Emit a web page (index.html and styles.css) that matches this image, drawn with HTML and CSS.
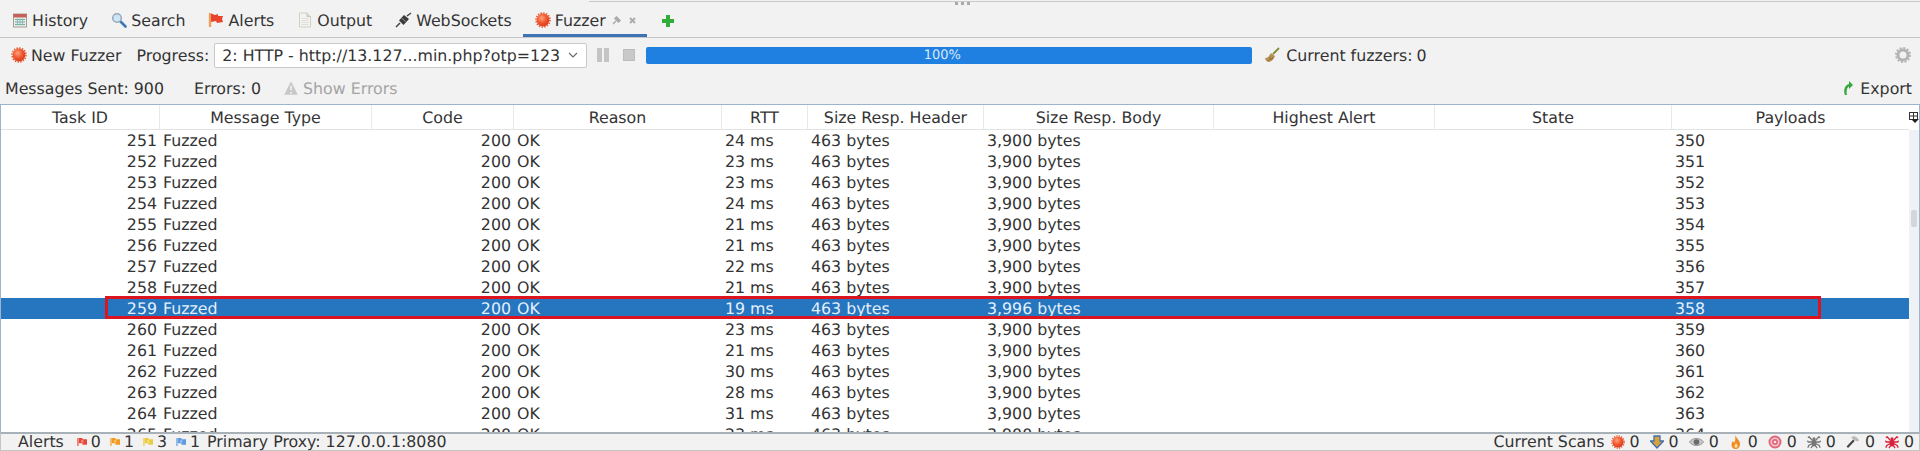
FILE: index.html
```html
<!DOCTYPE html>
<html>
<head>
    <title>Fuzzer</title>
    <link rel="stylesheet" href="styles.css">
</head>
<body>

<svg class="defs" width="0" height="0">
    <defs>
        <radialGradient id="ball" cx="40%" cy="35%" r="70%">
            <stop offset="0" stop-color="#ffa27a"/>
            <stop offset="0.55" stop-color="#f0562e"/>
            <stop offset="1" stop-color="#d23c1a"/>
        </radialGradient>
        <symbol id="burst" viewBox="0 0 16 16">
            <circle cx="8" cy="8" r="6.4" fill="url(#ball)"/>
            <circle cx="8" cy="8" r="7" fill="none" stroke="#e8562f" stroke-width="1.6" stroke-dasharray="1.4 1.35"/>
        </symbol>
        <symbol id="flag" viewBox="0 0 11 10">
            <path d="M1 0.500v9" stroke="currentColor" stroke-width="1.800" opacity=".7"/>
            <path d="M2 0.500h4v1.500h5v6H6V6.500H2z" fill="currentColor"/>
            <rect x="4.500" y="3" width="2.500" height="2.500" fill="#fff" opacity=".4"/>
        </symbol>
        <symbol id="spider" viewBox="0 0 16 16">
            <g fill="none" stroke="currentColor" stroke-width="1.500">
                <path d="M6 6L2.500 2 1 3M10 6l3.500-4L15 3M5.500 8H1.500L0.500 6.500M10.500 8h4l1-1.500M5.500 10L2 12l-1 2.500M10.500 10l3.500 2 1 2.500M6.500 12L4.500 15M9.500 12l2 3"/>
            </g>
            <ellipse cx="8" cy="9" rx="3" ry="4" fill="currentColor"/>
            <circle cx="8" cy="4.500" r="1.800" fill="currentColor"/>
        </symbol>
    </defs>
</svg>

<!-- TABS -->
<div class="tabs">
    <div class="topline"></div>
    <div class="grip"><i></i><i></i><i></i></div>

    <div class="tab">
        <svg class="icon" viewBox="0 0 16 16">
            <rect x="1.500" y="2" width="13" height="13" fill="#e8efe9" stroke="#a89a92"/>
            <rect x="1.500" y="2" width="13" height="3.500" fill="#c8605a"/>
            <path d="M3 7.500h10M3 10h10M3 12.500h10" stroke="#6fb28a" stroke-width="1.200"/>
            <path d="M5.500 6.500v7M8 6.500v7M10.500 6.500v7" stroke="#8fb4d4"/>
        </svg>
        <span>History</span>
    </div>
    <div class="tab">
        <svg class="icon" viewBox="0 0 16 16">
            <path d="M9.500 9.500l5 5" stroke="#3f77b5" stroke-width="2.600" stroke-linecap="round"/>
            <circle cx="6" cy="6" r="4.300" fill="#cfe4f5" stroke="#93a9bd" stroke-width="1.500"/>
        </svg>
        <span>Search</span>
    </div>
    <div class="tab">
        <svg class="icon" viewBox="0 0 16 16">
            <path d="M2 1v14" stroke="#e8a25c" stroke-width="2.400"/>
            <path d="M3 1.500l4 1.500 3-1 0 2 5 0-1 3 1 3-6 1-1-2-5 1z" fill="#e8452c"/>
        </svg>
        <span>Alerts</span>
    </div>
    <div class="tab">
        <svg class="icon" viewBox="0 0 16 16">
            <path d="M2.500 1h7.500l3.500 3.500V15h-11z" fill="#f4f4ee" stroke="#cfcfc8"/>
            <path d="M10 1v3.500h3.500" fill="#dcdcd4" stroke="#c4c4bc"/>
            <path d="M4.500 6.500h7M4.500 8.500h7M4.500 10.500h7M4.500 12.500h7" stroke="#dfdfd8"/>
        </svg>
        <span>Output</span>
    </div>
    <div class="tab">
        <svg class="icon wide" viewBox="0 0 17 16">
            <path d="M1 15l4-4M12 4l4-3" stroke="#444" stroke-width="1.500"/>
            <path d="M4 8.500l5-5.500 5 4-5.500 6z" fill="#3c3c3c"/>
            <path d="M6.500 6l4 3.500" stroke="#999"/>
        </svg>
        <span>WebSockets</span>
    </div>
    <div class="tab active">
        <svg class="icon"><use href="#burst"/></svg>
        <span>Fuzzer</span>
        <svg class="pin" viewBox="0 0 9 9">
            <path d="M1 8l3-3M3 2.500L6.500 6 8 4.500 4.500 1z" stroke="#aaa" stroke-width="1.500" fill="#aaa"/>
        </svg>
        <svg class="close" viewBox="0 0 7 7">
            <path d="M1 1l5 5M6 1l-5 5" stroke="#aaa" stroke-width="1.800"/>
        </svg>
    </div>
    <svg class="plus" viewBox="0 0 14 14">
        <path d="M7 1v12M1 7h12" stroke="#32ad3a" stroke-width="4"/>
    </svg>
</div>

<!-- TOOLBAR -->
<div class="toolbar">
    <svg class="icon"><use href="#burst"/></svg>
    <span class="new-fuzzer">New Fuzzer</span>
    <span class="progress-label">Progress:</span>
    <div class="select">
        <span>2: HTTP - http://13.127...min.php?otp=123</span>
        <svg class="chevron" viewBox="0 0 10 6">
            <path d="M1 1l4 4 4-4" fill="none" stroke="#666" stroke-width="1.100"/>
        </svg>
    </div>
    <div class="pause"><i></i><i></i></div>
    <div class="stop"></div>
    <div class="progress">100%</div>
    <svg class="icon broom" viewBox="0 0 16 16">
        <path d="M9 7l6-6" stroke="#7f8f3a" stroke-width="1.800"/>
        <path d="M1 11c3 0 4-2 6-5l4 3c-1 3-3 5-6 6-2 0-4-2-4-4z" fill="#b89254"/>
        <path d="M4 14l3-4M7 13l2-3" stroke="#8c6a34"/>
    </svg>
    <span class="fuzzers"><span>Current fuzzers:</span> <span>0</span></span>
    <svg class="gear" viewBox="0 0 16 16">
        <circle cx="8" cy="8" r="5" fill="none" stroke="#b4b4b4" stroke-width="3"/>
        <circle cx="8" cy="8" r="7" fill="none" stroke="#b4b4b4" stroke-width="2" stroke-dasharray="2 1.670"/>
    </svg>
</div>

<!-- INFO ROW -->
<div class="info">
    <span class="sent">Messages Sent: 900</span>
    <span class="errors">Errors: 0</span>
    <svg class="warn" viewBox="0 0 14 14">
        <path d="M7 1l6 12H1z" fill="#c8c8c8"/>
        <path d="M7 5v4M7 10.500v1.500" stroke="#f2f2f2" stroke-width="1.400"/>
    </svg>
    <span class="show-errors">Show Errors</span>
    <svg class="export-icon" viewBox="0 0 10 16">
        <path d="M2 15C0 10 2 5 6 4V1l4 4-4 4V6.500C4 7.500 3 11 4 15z" fill="#37a63c"/>
    </svg>
    <span>Export</span>
</div>

<!-- RESULTS -->
<div class="results">
    <div class="table-box">
        <table>
            <colgroup>
                <col class="c-id"><col class="c-type"><col class="c-code"><col class="c-reason"><col class="c-rtt">
                <col class="c-head"><col class="c-body"><col class="c-alert"><col class="c-state"><col class="c-pay">
            </colgroup>
            <thead>
                <tr>
                    <th>Task ID</th><th>Message Type</th><th>Code</th><th>Reason</th><th>RTT</th>
                    <th>Size Resp. Header</th><th>Size Resp. Body</th><th>Highest Alert</th><th>State</th><th>Payloads</th>
                </tr>
            </thead>
            <tbody>
                <tr><td class="num">251</td><td>Fuzzed</td><td class="num">200</td><td>OK</td><td>24 ms</td><td>463 bytes</td><td>3,900 bytes</td><td></td><td></td><td>350</td></tr>
                <tr><td class="num">252</td><td>Fuzzed</td><td class="num">200</td><td>OK</td><td>23 ms</td><td>463 bytes</td><td>3,900 bytes</td><td></td><td></td><td>351</td></tr>
                <tr><td class="num">253</td><td>Fuzzed</td><td class="num">200</td><td>OK</td><td>23 ms</td><td>463 bytes</td><td>3,900 bytes</td><td></td><td></td><td>352</td></tr>
                <tr><td class="num">254</td><td>Fuzzed</td><td class="num">200</td><td>OK</td><td>24 ms</td><td>463 bytes</td><td>3,900 bytes</td><td></td><td></td><td>353</td></tr>
                <tr><td class="num">255</td><td>Fuzzed</td><td class="num">200</td><td>OK</td><td>21 ms</td><td>463 bytes</td><td>3,900 bytes</td><td></td><td></td><td>354</td></tr>
                <tr><td class="num">256</td><td>Fuzzed</td><td class="num">200</td><td>OK</td><td>21 ms</td><td>463 bytes</td><td>3,900 bytes</td><td></td><td></td><td>355</td></tr>
                <tr><td class="num">257</td><td>Fuzzed</td><td class="num">200</td><td>OK</td><td>22 ms</td><td>463 bytes</td><td>3,900 bytes</td><td></td><td></td><td>356</td></tr>
                <tr><td class="num">258</td><td>Fuzzed</td><td class="num">200</td><td>OK</td><td>21 ms</td><td>463 bytes</td><td>3,900 bytes</td><td></td><td></td><td>357</td></tr>
                <tr class="selected"><td class="num">259</td><td>Fuzzed</td><td class="num">200</td><td>OK</td><td>19 ms</td><td>463 bytes</td><td>3,996 bytes</td><td></td><td></td><td>358</td></tr>
                <tr><td class="num">260</td><td>Fuzzed</td><td class="num">200</td><td>OK</td><td>23 ms</td><td>463 bytes</td><td>3,900 bytes</td><td></td><td></td><td>359</td></tr>
                <tr><td class="num">261</td><td>Fuzzed</td><td class="num">200</td><td>OK</td><td>21 ms</td><td>463 bytes</td><td>3,900 bytes</td><td></td><td></td><td>360</td></tr>
                <tr><td class="num">262</td><td>Fuzzed</td><td class="num">200</td><td>OK</td><td>30 ms</td><td>463 bytes</td><td>3,900 bytes</td><td></td><td></td><td>361</td></tr>
                <tr><td class="num">263</td><td>Fuzzed</td><td class="num">200</td><td>OK</td><td>28 ms</td><td>463 bytes</td><td>3,900 bytes</td><td></td><td></td><td>362</td></tr>
                <tr><td class="num">264</td><td>Fuzzed</td><td class="num">200</td><td>OK</td><td>31 ms</td><td>463 bytes</td><td>3,900 bytes</td><td></td><td></td><td>363</td></tr>
                <tr><td class="num">265</td><td>Fuzzed</td><td class="num">200</td><td>OK</td><td>23 ms</td><td>463 bytes</td><td>3,900 bytes</td><td></td><td></td><td>364</td></tr>
            </tbody>
        </table>
        <div class="redbox"></div>
    </div>
    <div class="vbar">
        <div class="corner">
            <svg viewBox="0 0 10 12" width="10" height="12">
                <rect x="0.500" y="0.500" width="8" height="7" fill="#fff" stroke="#333"/>
                <path d="M4.500 1v6M1 4h7" stroke="#333"/>
                <path d="M2 7h8l-4 4z" fill="#222"/>
            </svg>
        </div>
        <div class="thumb"></div>
    </div>
</div>

<!-- STATUS BAR -->
<div class="status">
    <span class="alerts-label">Alerts</span>
    <svg class="flag red"><use href="#flag"/></svg><span class="count">0</span>
    <svg class="flag orange"><use href="#flag"/></svg><span class="count">1</span>
    <svg class="flag yellow"><use href="#flag"/></svg><span class="count">3</span>
    <svg class="flag blue"><use href="#flag"/></svg><span class="count">1</span>
    <span class="proxy">Primary Proxy: 127.0.0.1:8080</span>

    <span class="scans">Current Scans</span>
    <svg class="sicon"><use href="#burst"/></svg><span class="scount">0</span>
    <svg class="sicon" viewBox="0 0 14 14">
        <path d="M4 1h6v5h3.500L7 13 0.500 6H4z" fill="#d9a23a" stroke="#3f6fb0" stroke-width="1.300"/>
    </svg><span class="scount">0</span>
    <svg class="sicon eye" viewBox="0 0 16 10">
        <path d="M0.500 5C4 0 12 0 15.500 5 12 10 4 10 0.500 5z" fill="#c9c9c9" stroke="#8d8d8d"/>
        <circle cx="8" cy="5" r="3" fill="#6a6a6a"/>
    </svg><span class="scount">0</span>
    <svg class="sicon" viewBox="0 0 10 14">
        <path d="M4 0c1 3 5 5 5 9 0 3-2 5-4.500 5S0.500 12 0.500 9.500C0.500 8 1.500 7 2 6c.5 1 1 1.500 1.500 1.500C4.500 6 4.500 3 4 0z" fill="#f08a24"/>
        <path d="M5 8c1 1.500 2 2.500 1.500 4-.5 1-2.500 1-3 0-.5-1.500 1-2.500 1.500-4z" fill="#fde3a0"/>
    </svg><span class="scount">0</span>
    <svg class="sicon" viewBox="0 0 14 14">
        <circle cx="7" cy="7" r="6.500" fill="#e0667a"/>
        <circle cx="7" cy="7" r="4.600" fill="#f5c5cb"/>
        <circle cx="7" cy="7" r="3" fill="#e0667a"/>
        <circle cx="7" cy="7" r="1.300" fill="#f5e0e2"/>
    </svg><span class="scount">0</span>
    <svg class="sicon gray"><use href="#spider"/></svg><span class="scount">0</span>
    <svg class="sicon" viewBox="0 0 16 16">
        <path d="M9 6L1.500 14" stroke="#444" stroke-width="2.400"/>
        <path d="M6 2.500C9 0.500 12 1.500 15 6l-2 1.500L9.500 6 8 5z" fill="#b9b9b9"/>
    </svg><span class="scount">0</span>
    <svg class="sicon crimson"><use href="#spider"/></svg><span class="scount">0</span>
</div>

</body>
</html>
```

FILE: styles.css
```css
* {
    box-sizing: border-box;
}

html, body {
    height: 100%;
}

body {
    margin: 0;
    height: 451px;
    overflow: hidden;
    display: flex;
    flex-direction: column;
    background: #f2f2f2;
    color: #333;
    font-family: "DejaVu Sans", sans-serif;
    font-size: 15.8px;
    text-rendering: geometricPrecision;
    white-space: nowrap;
}

.defs {
    position: absolute;
}

.icon {
    width: 16px;
    height: 16px;
    flex: none;
}

.icon.wide {
    width: 17px;
}

/* tabs */
.tabs {
    position: relative;
    height: 38px;
    flex: none;
    display: flex;
    align-items: center;
    border-bottom: 1px solid #c6c6c6;
}

.topline {
    position: absolute;
    left: 589px;
    right: 0;
    top: 1px;
    height: 1px;
    background: #c9c9c9;
}

.grip {
    position: absolute;
    left: 955px;
    top: 2px;
    display: flex;
    gap: 3px;
}

.grip i {
    width: 3px;
    height: 3px;
    background: #a9a9a9;
}

.tab {
    height: 37px;
    padding: 3px 11px 0 12px;
    display: flex;
    align-items: center;
    gap: 4px;
}

.tab.active {
    border-bottom: 3px solid #3d73b3;
    padding-top: 6px;
}

.pin {
    width: 9px;
    height: 9px;
    margin-left: 2px;
}

.close {
    width: 7px;
    height: 7px;
    margin-left: 4px;
}

.plus {
    width: 14px;
    height: 14px;
    margin-left: 14px;
    margin-top: 4px;
}

/* toolbar */
.toolbar {
    height: 34px;
    flex: none;
    display: flex;
    align-items: center;
    padding-left: 11px;
}

.new-fuzzer {
    margin-left: 4px;
}

.progress-label {
    margin-left: 15px;
}

.select {
    width: 373px;
    height: 25px;
    margin-left: 5px;
    padding: 0 8px 0 7px;
    display: flex;
    align-items: center;
    justify-content: space-between;
    background: #fff;
    border: 1px solid #c9c9c9;
    border-radius: 2px;
}

.chevron {
    width: 10px;
    height: 6px;
}

.pause {
    width: 12px;
    height: 14px;
    margin-left: 10px;
    display: flex;
    justify-content: space-between;
}

.pause i {
    width: 5px;
    background: #c4c4c4;
}

.stop {
    width: 12px;
    height: 12px;
    margin-left: 14px;
    background: #c8c8c8;
    border: 1px solid #bcbcbc;
}

.progress {
    width: 606px;
    height: 17px;
    margin-left: 11px;
    padding-right: 14px;
    background: #1f80e2;
    border-radius: 2px;
    color: #d8e8f8;
    font-size: 13px;
    line-height: 17px;
    text-align: center;
}

.broom {
    margin-left: 12px;
}

.fuzzers {
    margin-left: 6px;
    display: flex;
    gap: 4px;
}

.gear {
    width: 16px;
    height: 16px;
    margin-left: auto;
    margin-right: 9px;
}

/* info row */
.info {
    height: 32px;
    flex: none;
    display: flex;
    align-items: center;
    padding: 0 8px 0 5px;
}

.errors {
    margin-left: 30px;
}

.warn {
    width: 16px;
    height: 16px;
    margin-left: 22px;
}

.show-errors {
    margin-left: 4px;
    color: #a4a4a4;
}

.export-icon {
    width: 10px;
    height: 16px;
    margin-left: auto;
    margin-right: 7px;
}

/* results table */
.results {
    flex: 1;
    min-height: 0;
    display: flex;
    background: #fff;
    border: 1px solid #9db4cf;
    border-bottom: none;
}

.table-box {
    position: relative;
    width: 1908px;
    overflow: hidden;
}

table {
    width: 1908px;
    table-layout: fixed;
    border-collapse: separate;
    border-spacing: 0;
}

.c-id { width: 159px; }
.c-type { width: 212px; }
.c-code { width: 142px; }
.c-reason { width: 208px; }
.c-rtt { width: 86px; }
.c-head { width: 176px; }
.c-body { width: 230px; }
.c-alert { width: 221px; }
.c-state { width: 237px; }
.c-pay { width: 237px; }

th {
    height: 25px;
    padding: 0;
    font-weight: normal;
    color: #333;
    border-bottom: 1px solid #e3e3e3;
    border-right: 1px solid #e9e9e9;
}

th:last-child {
    border-right: none;
}

td {
    height: 21px;
    padding: 0 3px;
    line-height: 21px;
    overflow: hidden;
}

td.num {
    text-align: right;
}

.selected td {
    background: #2675bf;
    color: #e4f0fb;
}

.redbox {
    position: absolute;
    left: 104px;
    top: 191px;
    width: 1716px;
    height: 23px;
    border: 3px solid #dc1420;
}

.vbar {
    width: 10px;
    background: #eef1f5;
}

.corner {
    height: 25px;
    padding-top: 7px;
    background: #fff;
}

.corner svg {
    display: block;
}

.thumb {
    width: 6px;
    height: 17px;
    margin: 80px 0 0 2px;
    background: #d3d7dc;
    border-radius: 2px;
}

/* status bar */
.status {
    height: 19px;
    flex: none;
    display: flex;
    align-items: center;
    padding: 0 5px 0 17px;
    background: #f2f2f2;
    border-top: 2px solid #a8b0b8;
    border-bottom: 1px solid #c4c4c4;
    border-right: 1px solid #c4c4c4;
    border-left: 1px solid #c4c4c4;
    line-height: 16px;
}

.alerts-label {
    margin-right: 13px;
}

.flag {
    width: 10px;
    height: 10px;
}

.flag.red { color: #e8483a; }
.flag.orange { color: #f29a1e; }
.flag.yellow { color: #eccb3a; }
.flag.blue { color: #5f9be0; }

.count {
    margin: 0 9px 0 4px;
}

.proxy {
    margin-left: -2px;
}

.scans {
    margin-left: auto;
    margin-right: 6px;
}

.sicon {
    width: 14px;
    height: 14px;
}

.sicon.eye {
    width: 15px;
    height: 10px;
}

.sicon.gray { color: #777; }
.sicon.crimson { color: #d8203a; }

.scount {
    margin: 0 10px 0 5px;
}

.scount:last-child {
    margin-right: 0;
}
```
